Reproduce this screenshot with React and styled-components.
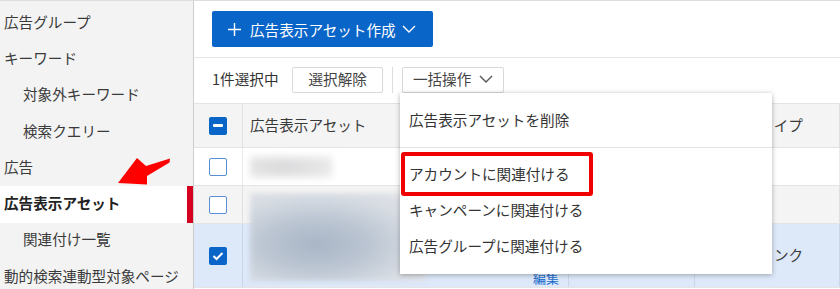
import React from 'react';
import styled, { createGlobalStyle } from 'styled-components';

const GlobalStyle = createGlobalStyle`
  body {
    margin: 0;
    font-family: "Noto Sans CJK JP", "Noto Sans", sans-serif;
    color: #333;
    background: #fff;
  }
  * { box-sizing: border-box; }
`;

const Page = styled.div`
  display: flex;
  width: 840px;
  height: 289px;
  overflow: hidden;
  border-top: 1px solid #dedede;
  font-size: 14.6px;
`;

const Sidebar = styled.nav`
  position: relative;
  flex: none;
  width: 194px;
  padding-top: 4px;
  background: #f3f3f3;
  border-right: 1px solid #cdcdcd;
`;

const NavItem = styled.div`
  display: flex;
  align-items: center;
  height: 36.3px;
  padding: 0 0 4px ${p => (p.$indent ? 23 : 4)}px;
  white-space: nowrap;
  color: ${p => (p.$active ? '#222' : '#3a3a3a')};
  font-weight: ${p => (p.$active ? 700 : 400)};
  background: ${p => (p.$active ? '#fff' : 'transparent')};
  box-shadow: ${p => (p.$active ? 'inset -6px 0 0 #d6001f' : 'none')};
`;

const Arrow = styled.svg`
  position: absolute;
  left: 110px;
  top: 149px;
`;

const Main = styled.main`
  position: relative;
  flex: 1;
  display: flex;
  flex-direction: column;
  background: #fff;
`;

const TopBar = styled.div`
  height: 57px;
  padding: 10px 0 0 18px;
  border-bottom: 1px solid #e6e6e6;
`;

const CreateButton = styled.button`
  display: flex;
  align-items: center;
  height: 36px;
  padding: 0 17px 0 16px;
  border: none;
  border-radius: 2px;
  background: #0a65c9;
  color: #fff;
  font: inherit;
  white-space: nowrap;
`;

const Label = styled.span`
  margin: 0 ${p => p.$right || 0}px 0 ${p => p.$left || 0}px;
`;

const Toolbar = styled.div`
  display: flex;
  align-items: center;
  height: 45px;
  padding: 0 0 2px 18px;
`;

const SelectedCount = styled.span`
  margin-right: 14px;
  padding-bottom: 2px;
  white-space: nowrap;
`;

const ToolButton = styled.button`
  display: flex;
  align-items: center;
  height: 26px;
  padding: 0 ${p => p.$pad || 15}px 2px;
  border: 1px solid #d9d9d9;
  border-radius: 2px;
  background: #fff;
  color: #444;
  font: inherit;
  white-space: nowrap;
`;

const Sep = styled.span`
  width: 1px;
  height: 26px;
  margin: 0 9px;
  background: #dddddd;
`;

const TableWrap = styled.div`
  position: relative;
  border-top: 1px solid #e4e4e4;
`;

const Row = styled.div`
  display: grid;
  grid-template-columns: 49px 326px 126px 1fr;
  height: ${p => p.$h}px;
  background: ${p => p.$bg};
  border-bottom: 1px solid #e4e4e4;
`;

const Cell = styled.div`
  display: flex;
  align-items: ${p => (p.$bottom ? 'flex-end' : 'center')};
  justify-content: ${p => (p.$center ? 'center' : p.$end ? 'flex-end' : 'flex-start')};
  padding: 0 ${p => p.$pr || 0}px ${p => p.$pb || 0}px ${p => p.$pl || 0}px;
  border-right: 1px solid rgba(0, 0, 0, 0.08);
  white-space: nowrap;
  overflow: hidden;
  color: #3a3a3a;
`;

const Check = styled.span`
  display: flex;
  align-items: center;
  justify-content: center;
  width: 18px;
  height: 18px;
  border-radius: 2px;
  background: ${p => (p.$on ? '#0a65c9' : '#fff')};
  border: ${p => (p.$on ? 'none' : '1.5px solid #5a8fd6')};
`;

const Dash = styled.span`
  width: 10px;
  height: 2.5px;
  background: #fff;
  border-radius: 1px;
`;

const BlurBlock = styled.div`
  width: ${p => p.$w}px;
  height: ${p => p.$h}px;
  background: radial-gradient(ellipse at 40% 50%, #d8d8da 0%, #e5e5e6 55%, #f0f0f0 100%);
  filter: blur(3.5px);
`;

const BigBlur = styled.div`
  position: absolute;
  left: 56px;
  top: 89px;
  width: 175px;
  height: 88px;
  z-index: 1;
  background: radial-gradient(ellipse at 38% 58%, #a9b5c6 0%, #bcc6d3 35%, #d6dbe2 65%, #e6e7ea 100%);
  filter: blur(2.5px);
`;

const EditLink = styled.span`
  font-size: 13px;
  line-height: 18px;
  color: #1a6ccc;
`;

const Menu = styled.div`
  position: absolute;
  left: 206px;
  top: 92px;
  width: 372px;
  z-index: 2;
  background: #fff;
  box-shadow: 0 1px 5px rgba(0, 0, 0, 0.3);
`;

const MenuGroup = styled.div`
  padding: ${p => (p.$first ? '10px 0 8px' : '9px 0')};
  border-bottom: ${p => (p.$first ? '1px solid #e2e2e2' : 'none')};
`;

const MenuItem = styled.div`
  display: flex;
  align-items: center;
  height: 36px;
  padding: 0 0 4px 9px;
  color: #333;
  white-space: nowrap;
`;

const Highlight = styled.div`
  position: absolute;
  left: 1px;
  top: 59px;
  width: 192px;
  height: 44px;
  border: 4px solid #f00000;
  border-radius: 3px;
`;

const Chevron = ({ color = '#fff' }) => (
  <svg width="14" height="8" viewBox="0 0 14 8">
    <polyline points="1,1 7,7 13,1" fill="none" stroke={color} strokeWidth="1.4" />
  </svg>
);

const Plus = () => (
  <svg width="13" height="13" viewBox="0 0 13 13">
    <path d="M6.5 0v13M0 6.5h13" stroke="#fff" strokeWidth="1.4" />
  </svg>
);

const Tick = () => (
  <svg width="12" height="10" viewBox="0 0 12 10">
    <polyline points="1.5,5 4.5,8 10.5,2" fill="none" stroke="#fff" strokeWidth="2" />
  </svg>
);

const navItems = [
  { label: '広告グループ' },
  { label: 'キーワード' },
  { label: '対象外キーワード', indent: true },
  { label: '検索クエリー', indent: true },
  { label: '広告' },
  { label: '広告表示アセット', active: true },
  { label: '関連付け一覧', indent: true },
  { label: '動的検索連動型対象ページ' },
];

export default function App() {
  return (
    <>
      <GlobalStyle />
      <Page>
        <Sidebar>
          {navItems.map(item => (
            <NavItem key={item.label} $indent={item.indent} $active={item.active}>
              {item.label}
            </NavItem>
          ))}
          <Arrow width="64" height="38" viewBox="0 0 64 38">
            <polygon points="8,33 27,8 36,16 60,8.5 59.5,12.5 37,26 37,34.5" fill="#ff0000" />
          </Arrow>
        </Sidebar>

        <Main>
          <TopBar>
            <CreateButton>
              <Plus />
              <Label $left={9} $right={6}>広告表示アセット作成</Label>
              <Chevron />
            </CreateButton>
          </TopBar>

          <Toolbar>
            <SelectedCount>1件選択中</SelectedCount>
            <ToolButton>選択解除</ToolButton>
            <Sep />
            <ToolButton $pad={10}>
              <Label $right={8}>一括操作</Label>
              <Chevron color="#555" />
            </ToolButton>
          </Toolbar>

          <TableWrap>
            <Row $h={44} $bg="#f4f4f4">
              <Cell $center><Check $on><Dash /></Check></Cell>
              <Cell $pl={7} $pb={3}>広告表示アセット</Cell>
              <Cell $pl={7} $pb={3}>ステータス</Cell>
              <Cell $pl={6} $pb={3}>アセットタイプ</Cell>
            </Row>
            <Row $h={38} $bg="#fff">
              <Cell $center><Check /></Cell>
              <Cell $pl={7}><BlurBlock $w={82} $h={22} /></Cell>
              <Cell />
              <Cell />
            </Row>
            <Row $h={38} $bg="#f4f4f4">
              <Cell $center><Check /></Cell>
              <Cell />
              <Cell />
              <Cell />
            </Row>
            <Row $h={64} $bg="#dde8f9">
              <Cell $center><Check $on><Tick /></Check></Cell>
              <Cell $bottom $end $pr={9}><EditLink>編集</EditLink></Cell>
              <Cell />
              <Cell $pl={6} $pb={2}>クイックリンク</Cell>
            </Row>
            <BigBlur />
          </TableWrap>

          <Menu>
            <MenuGroup $first>
              <MenuItem>広告表示アセットを削除</MenuItem>
            </MenuGroup>
            <MenuGroup>
              <MenuItem>アカウントに関連付ける</MenuItem>
              <MenuItem>キャンペーンに関連付ける</MenuItem>
              <MenuItem>広告グループに関連付ける</MenuItem>
            </MenuGroup>
            <Highlight />
          </Menu>
        </Main>
      </Page>
    </>
  );
}
